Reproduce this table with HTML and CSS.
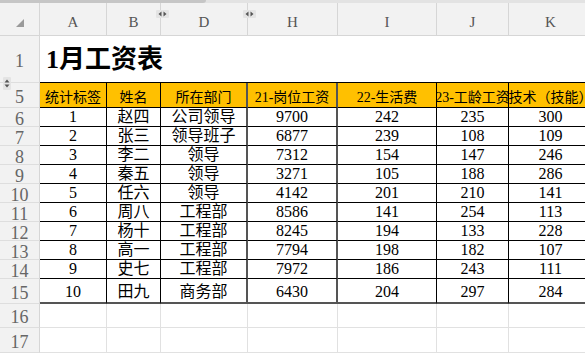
FILE: index.html
```html
<!DOCTYPE html>
<html lang="zh">
<head>
<meta charset="utf-8">
<title>1月工资表</title>
<link rel="stylesheet" href="styles.css">
</head>
<body>
<div class="topbar"><div class="thumb"></div></div>
<div class="sheet">
  <div class="corner"><svg class="tri" width="8" height="8" viewBox="0 0 8 8"><polygon points="8,0 8,8 0,8" fill="#9a9a9a"/></svg></div>
  <div class="ch">A</div>
  <div class="ch">B</div>
  <div class="ch">D<svg class="hidemark" width="13" height="8" viewBox="0 0 13 8"><rect x="0" y="0" width="13" height="8" rx="1" fill="#e4e4e4"/><polygon points="5.5,1.5 5.5,6.5 2.5,4" fill="#555"/><polygon points="7.5,1.5 7.5,6.5 10.5,4" fill="#555"/></svg></div>
  <div class="ch">H<svg class="hidemark" width="13" height="8" viewBox="0 0 13 8"><rect x="0" y="0" width="13" height="8" rx="1" fill="#e4e4e4"/><polygon points="5.5,1.5 5.5,6.5 2.5,4" fill="#555"/><polygon points="7.5,1.5 7.5,6.5 10.5,4" fill="#555"/></svg></div>
  <div class="ch">I</div>
  <div class="ch">J</div>
  <div class="ch">K</div>

  <div class="rh">1</div>
  <div class="title">1月工资表</div>

  <div class="rh">5<svg class="rowmark" width="8" height="13" viewBox="0 0 8 13"><rect x="0" y="0" width="8" height="13" rx="1" fill="#e4e4e4"/><polygon points="1.5,5.5 6.5,5.5 4,2.5" fill="#555"/><polygon points="1.5,7.5 6.5,7.5 4,10.5" fill="#555"/></svg></div>
  <div class="th">统计标签</div>
  <div class="th">姓名</div>
  <div class="th thick">所在部门</div>
  <div class="th thick">21-岗位工资</div>
  <div class="th">22-生活费</div>
  <div class="th">23-工龄工资</div>
  <div class="th">技术（技能）</div>

  <div class="rh">6</div>
  <div class="td">1</div><div class="td">赵四</div><div class="td thick">公司领导</div><div class="td thick">9700</div><div class="td">242</div><div class="td">235</div><div class="td">300</div>
  <div class="rh">7</div>
  <div class="td">2</div><div class="td">张三</div><div class="td thick">领导班子</div><div class="td thick">6877</div><div class="td">239</div><div class="td">108</div><div class="td">109</div>
  <div class="rh">8</div>
  <div class="td">3</div><div class="td">李二</div><div class="td thick">领导</div><div class="td thick">7312</div><div class="td">154</div><div class="td">147</div><div class="td">246</div>
  <div class="rh">9</div>
  <div class="td">4</div><div class="td">秦五</div><div class="td thick">领导</div><div class="td thick">3271</div><div class="td">105</div><div class="td">188</div><div class="td">286</div>
  <div class="rh">10</div>
  <div class="td">5</div><div class="td">任六</div><div class="td thick">领导</div><div class="td thick">4142</div><div class="td">201</div><div class="td">210</div><div class="td">141</div>
  <div class="rh">11</div>
  <div class="td">6</div><div class="td">周八</div><div class="td thick">工程部</div><div class="td thick">8586</div><div class="td">141</div><div class="td">254</div><div class="td">113</div>
  <div class="rh">12</div>
  <div class="td">7</div><div class="td">杨十</div><div class="td thick">工程部</div><div class="td thick">8245</div><div class="td">194</div><div class="td">133</div><div class="td">228</div>
  <div class="rh">13</div>
  <div class="td">8</div><div class="td">高一</div><div class="td thick">工程部</div><div class="td thick">7794</div><div class="td">198</div><div class="td">182</div><div class="td">107</div>
  <div class="rh">14</div>
  <div class="td">9</div><div class="td">史七</div><div class="td thick">工程部</div><div class="td thick">7972</div><div class="td">186</div><div class="td">243</div><div class="td">111</div>
  <div class="rh">15</div>
  <div class="td last">10</div><div class="td last">田九</div><div class="td thick last">商务部</div><div class="td thick last">6430</div><div class="td last">204</div><div class="td last">297</div><div class="td last">284</div>

  <div class="rh">16</div>
  <div class="empty"></div><div class="empty"></div><div class="empty"></div><div class="empty"></div><div class="empty"></div><div class="empty"></div><div class="empty"></div>
  <div class="rh">17</div>
  <div class="empty"></div><div class="empty"></div><div class="empty"></div><div class="empty"></div><div class="empty"></div><div class="empty"></div><div class="empty"></div>
</div>
</body>
</html>
```

FILE: styles.css
```css
* {
  box-sizing: border-box;
  margin: 0;
  padding: 0;
}

html,
body {
  width: 585px;
  height: 353px;
  overflow: hidden;
  background: #ffffff;
}

body {
  font-family: "Liberation Serif", "Noto Sans CJK SC", serif;
  color: #000000;
}

.topbar {
  height: 3px;
  background: #e3e3e3;
}

.thumb {
  width: 206px;
  height: 3px;
  background: #c6c6c6;
  border-radius: 0 0 3px 0;
}

.sheet {
  display: grid;
  grid-template-columns: 40px 67px 54px 87px 90px 99px 72px 84px;
  grid-template-rows: 33px 47px 25px repeat(9, 19px) 25px 24px 25px;
  width: 593px;
}

.corner {
  background: #f2f2f2;
  border-right: 1px solid #d6d6d6;
  border-bottom: 1px solid #d6d6d6;
  display: flex;
  align-items: center;
  justify-content: center;
  padding-top: 7px;
}

.ch {
  position: relative;
  background: #f2f2f2;
  border-right: 1px solid #d6d6d6;
  border-bottom: 1px solid #d6d6d6;
  display: flex;
  justify-content: center;
  align-items: center;
  padding-top: 7px;
  font-size: 15px;
  color: #555555;
}

.hidemark {
  position: absolute;
  left: -5px;
  top: 7px;
}

.rh {
  position: relative;
  background: #f2f2f2;
  border-right: 1px solid #d6d6d6;
  border-bottom: 1px solid #dedede;
  display: flex;
  justify-content: center;
  align-items: center;
  padding-top: 4px;
  font-size: 18px;
  color: #666666;
}

.rowmark {
  position: absolute;
  left: 3px;
  top: -6px;
}

.title {
  grid-column: 2 / -1;
  border-bottom: 1px solid #000000;
  display: flex;
  align-items: center;
  padding: 0 0 6px 6px;
  font-size: 26px;
  font-weight: bold;
}

.th,
.td {
  display: flex;
  justify-content: center;
  overflow: hidden;
  white-space: nowrap;
  border-right: 1px solid #000000;
  border-bottom: 1px solid #000000;
}

.th {
  background: #ffc000;
  align-items: center;
  padding-top: 2px;
  font-size: 14px;
}

.td {
  align-items: flex-end;
  font-size: 16px;
  line-height: 18px;
}

.thick {
  border-right: 2px solid #555555;
}

.last {
  border-bottom: 2px solid #555555;
  padding-bottom: 1px;
}

.empty {
  border-right: 1px solid #e1e1e1;
  border-bottom: 1px solid #e1e1e1;
}
```
